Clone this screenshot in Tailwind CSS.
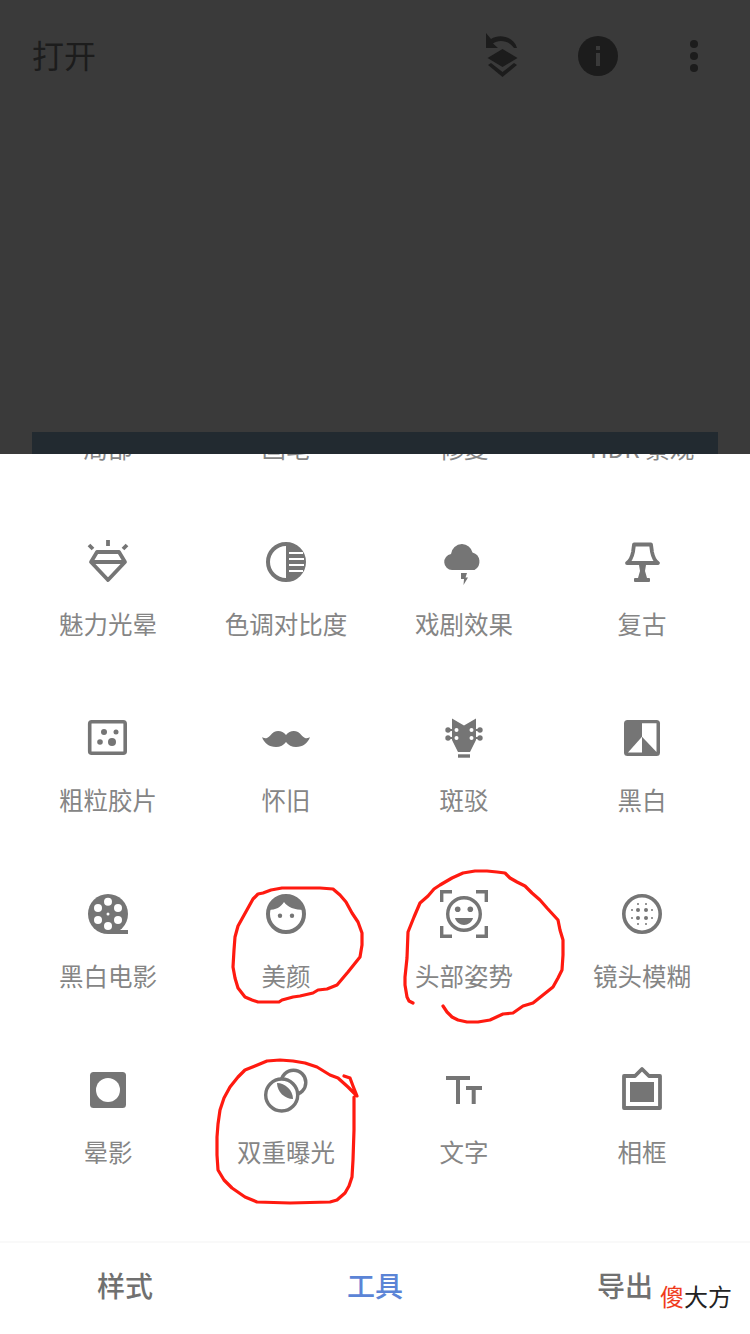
<!DOCTYPE html>
<html lang="en">

<head>
  <meta charset="UTF-8" />
  <meta name="viewport" content="width=device-width, initial-scale=1.0" />
  <title>Snapseed 工具</title>
  <script src="https://cdn.jsdelivr.net/npm/@tailwindcss/browser@4"></script>
</head>

<body class="bg-white font-['Noto_Sans_CJK_SC',sans-serif]">
  <div class="relative flex flex-col h-[1334px] w-[750px] overflow-hidden">

    <!-- Dimmed photo screen -->
    <header class="h-[454px] shrink-0 bg-[#3a3a3a] flex flex-col">
      <div class="flex items-center h-[112px] pl-[32px] text-[#1c1c1c]">
        <span class="text-[32px] leading-[44px] flex-1 -mt-[5px]">打开</span>
        <svg class="w-[48px] h-[48px] mr-[52px]" viewBox="0 0 48 48" fill="#1c1c1c">
          <path d="M8 1V16H20L15 11.500C20 7.500 31 8 36 16H39C36 5 22 1 13 7z" />
          <path d="M24.500 17L39.500 26L24.500 35L9.500 26z" />
          <path d="M10 33L13 31L24.500 40L36 31L39 33L24.500 45z" />
        </svg>
        <svg class="w-[40px] h-[40px] mr-[72px]" viewBox="0 0 40 40">
          <circle cx="20" cy="20" r="20" fill="#1c1c1c" />
          <rect x="18" y="17" width="4" height="13" fill="#3a3a3a" />
          <rect x="18" y="10" width="4" height="4" fill="#3a3a3a" />
        </svg>
        <div class="flex flex-col gap-[4px] mr-[52px]">
          <span class="w-[8px] h-[8px] rounded-full bg-[#1c1c1c]"></span>
          <span class="w-[8px] h-[8px] rounded-full bg-[#1c1c1c]"></span>
          <span class="w-[8px] h-[8px] rounded-full bg-[#1c1c1c]"></span>
        </div>
      </div>
      <div class="mt-auto mx-[32px] h-[22px] bg-[#222a30]"></div>
    </header>

    <!-- Tool grid -->
    <div class="flex-1 overflow-hidden">
      <div class="grid grid-cols-4 auto-rows-[176px] px-[19px] -mt-[116px] text-[24.500px] leading-[32px] text-[#858585] text-center">

        <div class="flex flex-col items-center pt-[24px] gap-[22px]"><div class="w-[48px] h-[48px]"></div><span>局部</span></div>
        <div class="flex flex-col items-center pt-[24px] gap-[22px]"><div class="w-[48px] h-[48px]"></div><span>画笔</span></div>
        <div class="flex flex-col items-center pt-[24px] gap-[22px]"><div class="w-[48px] h-[48px]"></div><span>修复</span></div>
        <div class="flex flex-col items-center pt-[24px] gap-[22px]"><div class="w-[48px] h-[48px]"></div><span>HDR 景观</span></div>

        <div class="flex flex-col items-center pt-[24px] gap-[22px]">
          <svg class="w-[48px] h-[48px]" viewBox="0 0 48 48" fill="none" stroke="#757575" stroke-width="3.800">
            <path d="M13 14H35L41 24L24 42L7 24z" stroke-linejoin="round" />
            <path d="M7 24H41" />
            <path d="M24 2V8M5 7L9 11M43 7L39 11" />
          </svg>
          <span>魅力光晕</span>
        </div>
        <div class="flex flex-col items-center pt-[24px] gap-[22px]">
          <svg class="w-[48px] h-[48px]" viewBox="0 0 48 48">
            <circle cx="24" cy="24" r="18" fill="none" stroke="#757575" stroke-width="4" />
            <path d="M24 6A18 18 0 0 1 24 42z" fill="#757575" />
            <path d="M27 15H41M27 21H42M27 27H42M27 33H41" stroke="#fff" stroke-width="2" />
          </svg>
          <span>色调对比度</span>
        </div>
        <div class="flex flex-col items-center pt-[24px] gap-[22px]">
          <svg class="w-[48px] h-[48px]" viewBox="0 0 48 48" fill="#757575">
            <path d="M12 32a8 8 0 0 1-1-15.900A11 11 0 0 1 22 6a11 11 0 0 1 10.500 8.500A9.500 9.500 0 0 1 34.500 32z" />
            <path d="M21 35h6l-1.500 4.500H28L23.500 47l.5-6H21z" />
          </svg>
          <span>戏剧效果</span>
        </div>
        <div class="flex flex-col items-center pt-[24px] gap-[22px]">
          <svg class="w-[48px] h-[48px]" viewBox="0 0 48 48" fill="#757575">
            <path d="M16 6.500H33L34 14C35 19 37 23 40 25H9C12 23 14 19 15 14z" fill="none" stroke="#757575" stroke-width="3.800" stroke-linejoin="round" />
            <path d="M21 27H28L27 33L29 40H20L22 33z" />
            <rect x="16" y="40" width="16" height="4" rx="1" />
          </svg>
          <span>复古</span>
        </div>

        <div class="flex flex-col items-center pt-[24px] gap-[22px]">
          <svg class="w-[48px] h-[48px]" viewBox="0 0 48 48" fill="#757575">
            <rect x="5.700" y="7.700" width="35.500" height="31.500" rx="2" fill="none" stroke="#757575" stroke-width="3.600" />
            <circle cx="20" cy="18" r="3" />
            <circle cx="32" cy="18" r="2.500" />
            <circle cx="16" cy="28" r="2.800" />
            <circle cx="28" cy="28" r="4" />
          </svg>
          <span>粗粒胶片</span>
        </div>
        <div class="flex flex-col items-center pt-[24px] gap-[22px]">
          <svg class="w-[48px] h-[48px]" viewBox="0 0 48 48" fill="#757575">
            <path d="M24 21c-3-4-8-5-12-3-3 1.500-4 5-7 6-2 .5-4 0-5-1 2 6 7 10 14 10 4 0 8-2 10-5 2 3 6 5 10 5 7 0 12-4 14-10-1 1-3 1.500-5 1-3-1-4-4.500-7-6-4-2-9-1-12 3z" />
          </svg>
          <span>怀旧</span>
        </div>
        <div class="flex flex-col items-center pt-[24px] gap-[22px]">
          <svg class="w-[48px] h-[48px]" viewBox="0 0 48 48" fill="#757575">
            <path d="M12 4.500L24 11.500L36 4.500V26L30 38H18L12 26z" />
            <rect x="18" y="40.300" width="12" height="3.400" />
            <path d="M8 16H14M8 24H14M34 16H40M34 24H40" stroke="#757575" stroke-width="2" />
            <circle cx="8" cy="16" r="2.700" />
            <circle cx="8" cy="24" r="2.700" />
            <circle cx="40" cy="16" r="2.700" />
            <circle cx="40" cy="24" r="2.700" />
            <circle cx="16.500" cy="16" r="2" fill="#fff" />
            <circle cx="16.500" cy="24" r="2" fill="#fff" />
            <circle cx="31.500" cy="16" r="2" fill="#fff" />
            <circle cx="31.500" cy="24" r="2" fill="#fff" />
          </svg>
          <span>斑驳</span>
        </div>
        <div class="flex flex-col items-center pt-[24px] gap-[22px]">
          <svg class="w-[48px] h-[48px]" viewBox="0 0 48 48">
            <rect x="6" y="6" width="36" height="36" rx="3.500" fill="#757575" />
            <path d="M24 9.300H38.500V38L24 22.700z" fill="#fff" />
            <path d="M10 38.500L24 22.700V38.500z" fill="#fff" />
          </svg>
          <span>黑白</span>
        </div>

        <div class="flex flex-col items-center pt-[24px] gap-[22px]">
          <svg class="w-[48px] h-[48px]" viewBox="0 0 48 48">
            <circle cx="24" cy="24" r="20" fill="#757575" />
            <rect x="24" y="40" width="20" height="4" fill="#757575" />
            <g fill="#fff">
              <circle cx="24" cy="11.700" r="4" />
              <circle cx="14" cy="18" r="4" />
              <circle cx="34" cy="18" r="4" />
              <circle cx="14" cy="30" r="4" />
              <circle cx="34" cy="30" r="4" />
              <circle cx="24" cy="36" r="4" />
              <circle cx="24" cy="24" r="1.500" />
            </g>
          </svg>
          <span>黑白电影</span>
        </div>
        <div class="flex flex-col items-center pt-[24px] gap-[22px]">
          <svg class="w-[48px] h-[48px]" viewBox="0 0 48 48" fill="#757575">
            <circle cx="24" cy="24" r="18" fill="none" stroke="#757575" stroke-width="4" />
            <path d="M6 20C14 20 19 17 22 12C25 17 33 20 42 20C41 10 32 5 24 5C16 5 7 10 6 20z" />
            <circle cx="18" cy="25.700" r="2.200" />
            <circle cx="30" cy="25.700" r="2.200" />
          </svg>
          <span>美颜</span>
        </div>
        <div class="flex flex-col items-center pt-[24px] gap-[22px]">
          <svg class="w-[48px] h-[48px]" viewBox="0 0 48 48" fill="#757575">
            <path d="M12 1.700H1.700V12M36 1.700H46.300V12M12 46.300H1.700V36M36 46.300H46.300V36" fill="none" stroke="#757575" stroke-width="3.400" />
            <circle cx="24" cy="24" r="16.300" fill="none" stroke="#757575" stroke-width="3.400" />
            <circle cx="17.700" cy="19.300" r="2.800" />
            <circle cx="30.300" cy="19.300" r="2.800" />
            <path d="M15 28H33C32 32 28 35 24 35C20 35 16 32 15 28z" />
          </svg>
          <span>头部姿势</span>
        </div>
        <div class="flex flex-col items-center pt-[24px] gap-[22px]">
          <svg class="w-[48px] h-[48px]" viewBox="0 0 48 48" fill="#757575">
            <circle cx="24" cy="24" r="18.200" fill="none" stroke="#757575" stroke-width="3.600" />
            <circle cx="20" cy="20" r="2" />
            <circle cx="28" cy="20" r="2" />
            <circle cx="20" cy="28" r="2" />
            <circle cx="28" cy="28" r="2" />
            <circle cx="20" cy="14" r="1" />
            <circle cx="28" cy="14" r="1" />
            <circle cx="20" cy="34" r="1" />
            <circle cx="28" cy="34" r="1" />
            <circle cx="14" cy="20" r="1" />
            <circle cx="34" cy="20" r="1" />
            <circle cx="14" cy="28" r="1" />
            <circle cx="34" cy="28" r="1" />
          </svg>
          <span>镜头模糊</span>
        </div>

        <div class="flex flex-col items-center pt-[24px] gap-[22px]">
          <svg class="w-[48px] h-[48px]" viewBox="0 0 48 48">
            <rect x="6" y="6" width="36" height="36" rx="3.500" fill="#757575" />
            <circle cx="24" cy="24" r="12" fill="#fff" />
          </svg>
          <span>晕影</span>
        </div>
        <div class="flex flex-col items-center pt-[24px] gap-[22px]">
          <svg class="w-[48px] h-[48px]" viewBox="0 0 48 48">
            <circle cx="31.500" cy="16.500" r="12.300" fill="none" stroke="#757575" stroke-width="3.400" />
            <circle cx="19.700" cy="29" r="16" fill="#fff" stroke="#757575" stroke-width="3.400" />
            <path d="M15 17C23 17 31 24 31 33C23 33 15 26 15 17z" fill="#757575" />
          </svg>
          <span>双重曝光</span>
        </div>
        <div class="flex flex-col items-center pt-[24px] gap-[22px]">
          <svg class="w-[48px] h-[48px]" viewBox="0 0 48 48" fill="#757575">
            <rect x="6" y="10" width="24" height="4" />
            <rect x="16" y="10" width="4" height="28" />
            <rect x="26" y="20" width="16" height="4" />
            <rect x="31.700" y="20" width="4" height="18" />
          </svg>
          <span>文字</span>
        </div>
        <div class="flex flex-col items-center pt-[24px] gap-[22px]">
          <svg class="w-[48px] h-[48px]" viewBox="0 0 48 48" fill="#757575">
            <path d="M6 10H17L24 3L31 10H42V42H6z" fill="none" stroke="#757575" stroke-width="3.800" stroke-linejoin="round" />
            <rect x="12" y="16" width="24" height="20" />
          </svg>
          <span>相框</span>
        </div>
      </div>
    </div>

    <!-- Bottom tabs -->
    <nav class="h-[93px] shrink-0 border-t-2 border-[#f9f9f9] grid grid-cols-3 text-[28px] leading-[36px] font-medium text-center pb-[7px] items-center">
      <span class="text-[#707070]">样式</span>
      <span class="text-[#5b84d6]">工具</span>
      <span class="text-[#707070]">导出</span>
    </nav>

    <!-- Watermark -->
    <div class="absolute left-[660px] top-[1280px] text-[24px] leading-[32px] text-[#222] whitespace-nowrap"><span class="text-[#f03c1c]">傻</span>大方</div>

    <!-- Hand-drawn red marks -->
    <svg class="absolute inset-0 w-[750px] h-[1334px] pointer-events-none" viewBox="0 0 750 1334" fill="none" stroke="#ff1a10" stroke-width="3.200" stroke-linejoin="round" stroke-linecap="round">
      <polyline points="282,888 271,890 263,893 258,894 253,899 248,908 243,917 238,926 235,937 234,950 233,967 235,978 238,988 245,997 252,1000 258,1002 270,1002 279,1002 282,1000 293,997 300,996 313,993 318,990 327,989 337,985 348,972 360,957 362,945 362,933 358,922 352,913 346,902 340,895 333,889 320,888 300,888 282,888" />
      <polyline points="413,1003 409,1001 407,997 405,985 405,977 407,958 408,932 414,917 420,903 428,896 434,889 440,885 452,878 463,873 475,871 487,871 497,872 505,873 510,878 517,882 525,886 532,893 540,900 547,908 558,920 560,930 563,940 563,955 562,970 558,978 553,987 543,995 533,1003 523,1006 513,1013 503,1014 490,1020 478,1022 467,1022 458,1020 452,1017 447,1012 443,1006" />
      <polyline points="344,1076 350,1078 353,1086 357,1096 348,1087 338,1078 330,1075 317,1067 305,1063 293,1061 280,1060 267,1061 255,1066 245,1070 238,1077 230,1087 224,1098 220,1110 218,1124 217,1137 217,1155 218,1170 224,1180 232,1188 245,1197 257,1202 290,1203 330,1202 337,1200 345,1193 349,1186 352,1177 353,1160 354,1130 354,1097" />
    </svg>
  </div>
</body>

</html>
